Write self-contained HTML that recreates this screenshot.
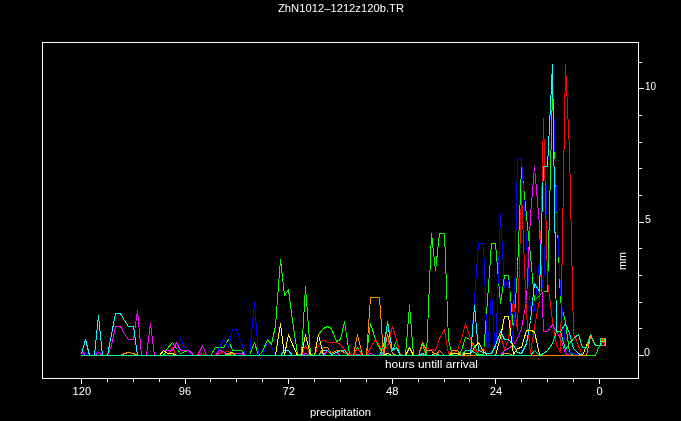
<!DOCTYPE html><html><head><meta charset="utf-8"><style>html,body{margin:0;padding:0;background:#000;}svg{display:block}</style></head><body><svg width="681" height="421" viewBox="0 0 681 421"><rect width="681" height="421" fill="#000"/><g fill="none" stroke-width="1" stroke-linecap="square" stroke-linejoin="round" shape-rendering="crispEdges"><polyline stroke="#00ff00" points="81.5,355.5 85.5,355.5 89.5,355.5 94.5,355.5 98.5,355.5 102.5,355.5 107.5,355.5 111.5,355.5 115.5,355.5 120.5,355.5 124.5,355.5 128.5,355.5 133.5,355.5 137.5,355.5 141.5,355.5 146.5,355.5 150.5,355.5 154.5,355.5 159.5,355.5 163.5,355.5 167.5,348.5 172.5,342.5 176.5,348.5 180.5,353.5 185.5,351.5 189.5,351.5 193.5,355.5 197.5,355.5 202.5,355.5 206.5,355.5 210.5,355.5 215.5,347.5 219.5,347.5 223.5,347.5 228.5,339.5 232.5,350.5 236.5,350.5 241.5,350.5 245.5,355.5 249.5,355.5 254.5,342.5 258.5,355.5 262.5,351.5 267.5,339.5 271.5,344.5 275.5,325.5 280.5,259.5 284.5,295.5 288.5,289.5 292.5,320.5 297.5,354.5 301.5,354.5 305.5,286.5 310.5,354.5 314.5,355.5 318.5,334.5 323.5,328.5 327.5,326.5 331.5,328.5 336.5,341.5 340.5,339.5 344.5,321.5 349.5,354.5 353.5,355.5 357.5,347.5 362.5,355.5 366.5,355.5 370.5,323.5 375.5,339.5 379.5,347.5 383.5,355.5 387.5,321.5 392.5,350.5 396.5,340.5 400.5,355.5 405.5,355.5 409.5,305.5 413.5,355.5 418.5,355.5 422.5,344.5 426.5,355.5 431.5,233.5 435.5,270.5 439.5,233.5 444.5,233.5 448.5,340.5 452.5,355.5 457.5,355.5 461.5,350.5 465.5,337.5 470.5,339.5 474.5,345.5 478.5,354.5 483.5,354.5 487.5,300.5 491.5,243.5 495.5,243.5 500.5,303.5 504.5,275.5 508.5,275.5 513.5,330.5 517.5,270.5 521.5,166.5 526.5,215.5 530.5,255.5 534.5,300.5 539.5,295.5 543.5,291.5 547.5,291.5 552.5,90.5 556.5,200.5 560.5,300.5 565.5,322.5 569.5,352.5 573.5,355.5 578.5,355.5 582.5,355.5 586.5,355.5 590.5,355.5 595.5,355.5 599.5,345.5"/><polyline stroke="#0000ff" points="81.5,355.5 85.5,352.5 89.5,354.5 94.5,355.5 98.5,350.5 102.5,355.5 107.5,355.5 111.5,355.5 115.5,355.5 120.5,355.5 124.5,355.5 128.5,355.5 133.5,355.5 137.5,355.5 141.5,355.5 146.5,355.5 150.5,355.5 154.5,355.5 159.5,355.5 163.5,355.5 167.5,355.5 172.5,355.5 176.5,355.5 180.5,337.5 185.5,349.5 189.5,352.5 193.5,355.5 197.5,355.5 202.5,355.5 206.5,355.5 210.5,355.5 215.5,355.5 219.5,347.5 223.5,339.5 228.5,347.5 232.5,329.5 236.5,329.5 241.5,342.5 245.5,355.5 249.5,355.5 254.5,302.5 258.5,355.5 262.5,355.5 267.5,342.5 271.5,346.5 275.5,355.5 280.5,355.5 284.5,355.5 288.5,355.5 292.5,355.5 297.5,355.5 301.5,355.5 305.5,355.5 310.5,355.5 314.5,355.5 318.5,355.5 323.5,355.5 327.5,355.5 331.5,355.5 336.5,355.5 340.5,355.5 344.5,355.5 349.5,355.5 353.5,355.5 357.5,355.5 362.5,355.5 366.5,355.5 370.5,355.5 375.5,355.5 379.5,355.5 383.5,355.5 387.5,355.5 392.5,355.5 396.5,355.5 400.5,355.5 405.5,355.5 409.5,355.5 413.5,355.5 418.5,355.5 422.5,355.5 426.5,355.5 431.5,355.5 435.5,355.5 439.5,355.5 444.5,355.5 448.5,355.5 452.5,355.5 457.5,355.5 461.5,355.5 465.5,355.5 470.5,355.5 474.5,299.5 478.5,243.5 483.5,243.5 487.5,355.5 491.5,291.5 495.5,355.5 500.5,214.5 504.5,287.5 508.5,280.5 513.5,350.5 517.5,158.5 521.5,158.5 526.5,240.5 530.5,310.5 534.5,310.5 539.5,260.5 543.5,291.5 547.5,170.5 552.5,68.5 556.5,200.5 560.5,290.5 565.5,345.5 569.5,352.5 573.5,353.5 578.5,354.5 582.5,355.5 586.5,355.5"/><polyline stroke="#ff0000" points="81.5,355.5 85.5,355.5 89.5,355.5 94.5,355.5 98.5,355.5 102.5,355.5 107.5,355.5 111.5,355.5 115.5,355.5 120.5,355.5 124.5,355.5 128.5,355.5 133.5,355.5 137.5,355.5 141.5,355.5 146.5,355.5 150.5,355.5 154.5,355.5 159.5,355.5 163.5,355.5 167.5,355.5 172.5,347.5 176.5,355.5 180.5,355.5 185.5,355.5 189.5,355.5 193.5,355.5 197.5,355.5 202.5,353.5 206.5,355.5 210.5,355.5 215.5,355.5 219.5,353.5 223.5,352.5 228.5,351.5 232.5,355.5 236.5,355.5 241.5,355.5 245.5,355.5 249.5,355.5 254.5,355.5 258.5,355.5 262.5,355.5 267.5,355.5 271.5,355.5 275.5,355.5 280.5,355.5 284.5,355.5 288.5,355.5 292.5,355.5 297.5,355.5 301.5,355.5 305.5,345.5 310.5,355.5 314.5,355.5 318.5,345.5 323.5,339.5 327.5,342.5 331.5,342.5 336.5,342.5 340.5,344.5 344.5,349.5 349.5,354.5 353.5,355.5 357.5,348.5 362.5,355.5 366.5,355.5 370.5,347.5 375.5,339.5 379.5,345.5 383.5,351.5 387.5,346.5 392.5,326.5 396.5,339.5 400.5,354.5 405.5,355.5 409.5,355.5 413.5,355.5 418.5,355.5 422.5,355.5 426.5,348.5 431.5,349.5 435.5,350.5 439.5,338.5 444.5,329.5 448.5,353.5 452.5,353.5 457.5,350.5 461.5,338.5 465.5,323.5 470.5,338.5 474.5,350.5 478.5,351.5 483.5,348.5 487.5,355.5 491.5,352.5 495.5,345.5 500.5,333.5 504.5,349.5 508.5,339.5 513.5,300.5 517.5,330.5 521.5,192.5 526.5,315.5 530.5,353.5 534.5,326.5 539.5,300.5 543.5,118.5 547.5,280.5 552.5,320.5 556.5,345.5 560.5,352.5 565.5,64.5 569.5,150.5 573.5,333.5 578.5,345.5 582.5,355.5 586.5,355.5"/><polyline stroke="#ff00ff" points="81.5,350.5 85.5,355.5 89.5,355.5 94.5,355.5 98.5,352.5 102.5,355.5 107.5,355.5 111.5,345.5 115.5,326.5 120.5,326.5 124.5,333.5 128.5,339.5 133.5,339.5 137.5,310.5 141.5,355.5 146.5,355.5 150.5,323.5 154.5,355.5 159.5,355.5 163.5,350.5 167.5,350.5 172.5,350.5 176.5,342.5 180.5,350.5 185.5,350.5 189.5,350.5 193.5,355.5 197.5,355.5 202.5,345.5 206.5,355.5 210.5,355.5 215.5,355.5 219.5,350.5 223.5,351.5 228.5,355.5 232.5,355.5 236.5,353.5 241.5,353.5 245.5,355.5 249.5,355.5 254.5,355.5 258.5,355.5 262.5,355.5 267.5,355.5 271.5,355.5 275.5,355.5 280.5,355.5 284.5,355.5 288.5,355.5 292.5,355.5 297.5,355.5 301.5,355.5 305.5,353.5 310.5,355.5 314.5,355.5 318.5,355.5 323.5,355.5 327.5,350.5 331.5,354.5 336.5,352.5 340.5,355.5 344.5,355.5 349.5,355.5 353.5,355.5 357.5,354.5 362.5,355.5 366.5,355.5 370.5,353.5 375.5,355.5 379.5,355.5 383.5,352.5 387.5,355.5 392.5,355.5 396.5,355.5 400.5,355.5 405.5,355.5 409.5,355.5 413.5,355.5 418.5,355.5 422.5,355.5 426.5,355.5 431.5,355.5 435.5,355.5 439.5,355.5 444.5,355.5 448.5,355.5 452.5,355.5 457.5,355.5 461.5,355.5 465.5,355.5 470.5,355.5 474.5,355.5 478.5,355.5 483.5,355.5 487.5,355.5 491.5,355.5 495.5,355.5 500.5,355.5 504.5,350.5 508.5,348.5 513.5,344.5 517.5,338.5 521.5,328.5 526.5,300.5 530.5,215.5 534.5,166.5 539.5,225.5 543.5,331.5 547.5,331.5 552.5,324.5 556.5,331.5 560.5,338.5 565.5,353.5 569.5,355.5 573.5,355.5 578.5,355.5 582.5,355.5 586.5,355.5"/><polyline stroke="#00ffff" points="81.5,353.5 85.5,339.5 89.5,355.5 94.5,355.5 98.5,315.5 102.5,355.5 107.5,355.5 111.5,334.5 115.5,313.5 120.5,313.5 124.5,320.5 128.5,326.5 133.5,326.5 137.5,355.5 141.5,355.5 146.5,355.5 150.5,355.5 154.5,355.5 159.5,355.5 163.5,355.5 167.5,355.5 172.5,355.5 176.5,355.5 180.5,355.5 185.5,355.5 189.5,355.5 193.5,355.5 197.5,355.5 202.5,355.5 206.5,355.5 210.5,355.5 215.5,355.5 219.5,355.5 223.5,355.5 228.5,355.5 232.5,355.5 236.5,355.5 241.5,355.5 245.5,355.5 249.5,355.5 254.5,355.5 258.5,355.5 262.5,355.5 267.5,355.5 271.5,355.5 275.5,355.5 280.5,355.5 284.5,350.5 288.5,350.5 292.5,355.5 297.5,355.5 301.5,355.5 305.5,355.5 310.5,355.5 314.5,355.5 318.5,355.5 323.5,350.5 327.5,350.5 331.5,354.5 336.5,352.5 340.5,350.5 344.5,350.5 349.5,355.5 353.5,355.5 357.5,355.5 362.5,355.5 366.5,355.5 370.5,355.5 375.5,355.5 379.5,355.5 383.5,345.5 387.5,323.5 392.5,350.5 396.5,347.5 400.5,355.5 405.5,355.5 409.5,355.5 413.5,355.5 418.5,355.5 422.5,353.5 426.5,355.5 431.5,355.5 435.5,353.5 439.5,355.5 444.5,355.5 448.5,355.5 452.5,355.5 457.5,355.5 461.5,355.5 465.5,355.5 470.5,355.5 474.5,305.5 478.5,350.5 483.5,352.5 487.5,353.5 491.5,353.5 495.5,345.5 500.5,331.5 504.5,339.5 508.5,339.5 513.5,345.5 517.5,352.5 521.5,353.5 526.5,343.5 530.5,320.5 534.5,283.5 539.5,291.5 543.5,166.5 547.5,166.5 552.5,64.5 556.5,331.5 560.5,331.5 565.5,323.5 569.5,333.5 573.5,348.5 578.5,353.5 582.5,355.5 586.5,355.5"/><polyline stroke="#ffff00" points="81.5,355.5 85.5,355.5 89.5,355.5 94.5,355.5 98.5,355.5 102.5,355.5 107.5,355.5 111.5,355.5 115.5,355.5 120.5,355.5 124.5,355.5 128.5,355.5 133.5,355.5 137.5,355.5 141.5,355.5 146.5,355.5 150.5,355.5 154.5,355.5 159.5,355.5 163.5,350.5 167.5,353.5 172.5,353.5 176.5,355.5 180.5,355.5 185.5,355.5 189.5,355.5 193.5,355.5 197.5,355.5 202.5,355.5 206.5,355.5 210.5,355.5 215.5,355.5 219.5,355.5 223.5,355.5 228.5,353.5 232.5,352.5 236.5,355.5 241.5,355.5 245.5,355.5 249.5,355.5 254.5,355.5 258.5,355.5 262.5,355.5 267.5,355.5 271.5,355.5 275.5,355.5 280.5,323.5 284.5,355.5 288.5,334.5 292.5,344.5 297.5,355.5 301.5,355.5 305.5,334.5 310.5,355.5 314.5,355.5 318.5,334.5 323.5,355.5 327.5,355.5 331.5,355.5 336.5,355.5 340.5,355.5 344.5,355.5 349.5,355.5 353.5,355.5 357.5,355.5 362.5,355.5 366.5,355.5 370.5,355.5 375.5,355.5 379.5,355.5 383.5,355.5 387.5,353.5 392.5,355.5 396.5,355.5 400.5,355.5 405.5,355.5 409.5,347.5 413.5,355.5 418.5,355.5 422.5,355.5 426.5,355.5 431.5,355.5 435.5,355.5 439.5,355.5 444.5,355.5 448.5,355.5 452.5,353.5 457.5,353.5 461.5,355.5 465.5,353.5 470.5,353.5 474.5,347.5 478.5,342.5 483.5,351.5 487.5,355.5 491.5,355.5 495.5,355.5 500.5,337.5 504.5,316.5 508.5,316.5 513.5,354.5 517.5,348.5 521.5,347.5 526.5,330.5 530.5,330.5 534.5,331.5 539.5,354.5 543.5,355.5 547.5,355.5 552.5,355.5 556.5,355.5 560.5,355.5 565.5,355.5 569.5,355.5 573.5,355.5 578.5,355.5 582.5,355.5 586.5,345.5 590.5,335.5 595.5,345.5 599.5,345.5"/><polyline stroke="#ff8c00" points="81.5,355.5 85.5,355.5 89.5,355.5 94.5,355.5 98.5,355.5 102.5,355.5 107.5,355.5 111.5,355.5 115.5,355.5 120.5,355.5 124.5,353.5 128.5,352.5 133.5,353.5 137.5,355.5 141.5,355.5 146.5,355.5 150.5,355.5 154.5,355.5 159.5,355.5 163.5,355.5 167.5,355.5 172.5,355.5 176.5,355.5 180.5,355.5 185.5,355.5 189.5,355.5 193.5,355.5 197.5,355.5 202.5,355.5 206.5,355.5 210.5,355.5 215.5,355.5 219.5,355.5 223.5,355.5 228.5,354.5 232.5,353.5 236.5,355.5 241.5,355.5 245.5,355.5 249.5,355.5 254.5,355.5 258.5,355.5 262.5,355.5 267.5,355.5 271.5,355.5 275.5,355.5 280.5,355.5 284.5,355.5 288.5,355.5 292.5,355.5 297.5,355.5 301.5,355.5 305.5,355.5 310.5,355.5 314.5,355.5 318.5,355.5 323.5,347.5 327.5,347.5 331.5,353.5 336.5,350.5 340.5,350.5 344.5,352.5 349.5,355.5 353.5,355.5 357.5,334.5 362.5,355.5 366.5,355.5 370.5,297.5 375.5,297.5 379.5,297.5 383.5,355.5 387.5,334.5 392.5,353.5 396.5,355.5 400.5,355.5 405.5,355.5 409.5,355.5 413.5,355.5 418.5,355.5 422.5,342.5 426.5,350.5 431.5,350.5 435.5,355.5 439.5,350.5 444.5,355.5 448.5,355.5 452.5,350.5 457.5,350.5 461.5,355.5 465.5,355.5 470.5,355.5 474.5,355.5 478.5,355.5 483.5,355.5 487.5,355.5 491.5,355.5 495.5,355.5 500.5,355.5 504.5,353.5 508.5,353.5 513.5,355.5 517.5,355.5 521.5,355.5 526.5,355.5 530.5,355.5 534.5,355.5 539.5,355.5 543.5,355.5 547.5,355.5 552.5,355.5 556.5,355.5 560.5,355.5 565.5,355.5 569.5,355.5 573.5,355.5 578.5,355.5 582.5,355.5 586.5,355.5 590.5,336.5 595.5,345.5 599.5,345.5"/><polyline stroke="#00ff80" points="81.5,355.5 85.5,355.5 89.5,355.5 94.5,355.5 98.5,355.5 102.5,355.5 107.5,355.5 111.5,355.5 115.5,355.5 120.5,355.5 124.5,355.5 128.5,355.5 133.5,355.5 137.5,355.5 141.5,355.5 146.5,355.5 150.5,355.5 154.5,355.5 159.5,355.5 163.5,355.5 167.5,355.5 172.5,355.5 176.5,355.5 180.5,355.5 185.5,355.5 189.5,355.5 193.5,355.5 197.5,355.5 202.5,355.5 206.5,355.5 210.5,355.5 215.5,355.5 219.5,355.5 223.5,355.5 228.5,355.5 232.5,355.5 236.5,355.5 241.5,355.5 245.5,355.5 249.5,355.5 254.5,355.5 258.5,355.5 262.5,355.5 267.5,355.5 271.5,355.5 275.5,355.5 280.5,355.5 284.5,355.5 288.5,355.5 292.5,355.5 297.5,355.5 301.5,355.5 305.5,355.5 310.5,355.5 314.5,355.5 318.5,355.5 323.5,355.5 327.5,355.5 331.5,355.5 336.5,355.5 340.5,355.5 344.5,355.5 349.5,355.5 353.5,355.5 357.5,355.5 362.5,355.5 366.5,355.5 370.5,355.5 375.5,355.5 379.5,355.5 383.5,355.5 387.5,355.5 392.5,355.5 396.5,355.5 400.5,355.5 405.5,355.5 409.5,355.5 413.5,355.5 418.5,355.5 422.5,355.5 426.5,355.5 431.5,355.5 435.5,355.5 439.5,355.5 444.5,355.5 448.5,355.5 452.5,355.5 457.5,355.5 461.5,355.5 465.5,350.5 470.5,350.5 474.5,352.5 478.5,355.5 483.5,355.5 487.5,355.5 491.5,355.5 495.5,355.5 500.5,355.5 504.5,355.5 508.5,355.5 513.5,355.5 517.5,355.5 521.5,355.5 526.5,355.5 530.5,355.5 534.5,350.5 539.5,355.5 543.5,353.5 547.5,350.5 552.5,343.5 556.5,331.5 560.5,331.5 565.5,349.5 569.5,343.5 573.5,338.5 578.5,334.5 582.5,347.5 586.5,347.5 590.5,334.5 595.5,345.5 599.5,345.5"/></g><g shape-rendering="crispEdges"><rect x="600" y="338" width="1" height="8" fill="#00ff80"/><rect x="605" y="338" width="1" height="8" fill="#80ff00"/><rect x="601" y="338" width="4" height="1" fill="#ff8c00"/><rect x="601" y="341" width="4" height="1" fill="#80ff00"/><rect x="601" y="345" width="4" height="1" fill="#ff8c00"/><rect x="601" y="345" width="1" height="1" fill="#ff00ff"/><rect x="604" y="345" width="1" height="1" fill="#ff00ff"/><rect x="601" y="339" width="2" height="1" fill="#ff4000"/><rect x="603" y="339" width="1" height="1" fill="#ff0000"/><rect x="604" y="339" width="1" height="1" fill="#00ffff"/><rect x="601" y="340" width="1" height="1" fill="#ff0000"/><rect x="602" y="340" width="1" height="1" fill="#ff8c00"/><rect x="603" y="340" width="1" height="1" fill="#ff0000"/><rect x="604" y="340" width="1" height="1" fill="#ff8c00"/><rect x="601" y="342" width="2" height="1" fill="#ff0000"/><rect x="603" y="342" width="1" height="1" fill="#ff8c00"/><rect x="604" y="342" width="1" height="1" fill="#ff0000"/><rect x="601" y="343" width="1" height="2" fill="#ff8c00"/><rect x="604" y="343" width="1" height="1" fill="#ff0000"/><rect x="604" y="344" width="1" height="1" fill="#ff8c00"/></g><g shape-rendering="crispEdges" stroke="#fff" stroke-width="1" fill="none"><path d="M42.5 42.5H638.5V378.5H42.5Z"/><path d="M81.5 379V384M107.5 379V382M133.5 379V382M159.5 379V382M185.5 379V384M210.5 379V382M236.5 379V382M262.5 379V382M288.5 379V384M314.5 379V382M340.5 379V382M366.5 379V382M392.5 379V384M418.5 379V382M444.5 379V382M469.5 379V382M495.5 379V384M521.5 379V382M547.5 379V382M573.5 379V382M599.5 379V384M639 355.5H644M639 328.5H642M639 302.5H642M639 275.5H642M639 248.5H642M639 222.5H644M639 195.5H642M639 168.5H642M639 142.5H642M639 115.5H642M639 88.5H644M639 62.5H642"/></g><g fill="#fff" font-family="Liberation Sans, sans-serif" font-size="11px" style="filter:grayscale(1)"><text x="278" y="12" font-size="11px" textLength="126" lengthAdjust="spacingAndGlyphs">ZhN1012&#8211;1212z120b.TR</text><text x="72.5" y="395" textLength="18.6" lengthAdjust="spacingAndGlyphs">120</text><text x="178.8" y="395" textLength="12.4" lengthAdjust="spacingAndGlyphs">96</text><text x="282.6" y="395" textLength="12.4" lengthAdjust="spacingAndGlyphs">72</text><text x="386.0" y="395" textLength="12.4" lengthAdjust="spacingAndGlyphs">48</text><text x="489.8" y="395" textLength="12.4" lengthAdjust="spacingAndGlyphs">24</text><text x="596.4" y="395" textLength="6.2" lengthAdjust="spacingAndGlyphs">0</text><text x="645" y="89.5" textLength="11" lengthAdjust="spacingAndGlyphs">10</text><text x="645" y="223" textLength="6" lengthAdjust="spacingAndGlyphs">5</text><text x="644" y="356" textLength="6" lengthAdjust="spacingAndGlyphs">0</text><text x="385" y="368" font-size="10px" textLength="93" lengthAdjust="spacingAndGlyphs">hours untill arrival</text><text x="310" y="416" textLength="61" lengthAdjust="spacingAndGlyphs">precipitation</text><text transform="translate(626 270) rotate(-90)" x="0" y="0" textLength="18" lengthAdjust="spacingAndGlyphs">mm</text></g></svg></body></html>
